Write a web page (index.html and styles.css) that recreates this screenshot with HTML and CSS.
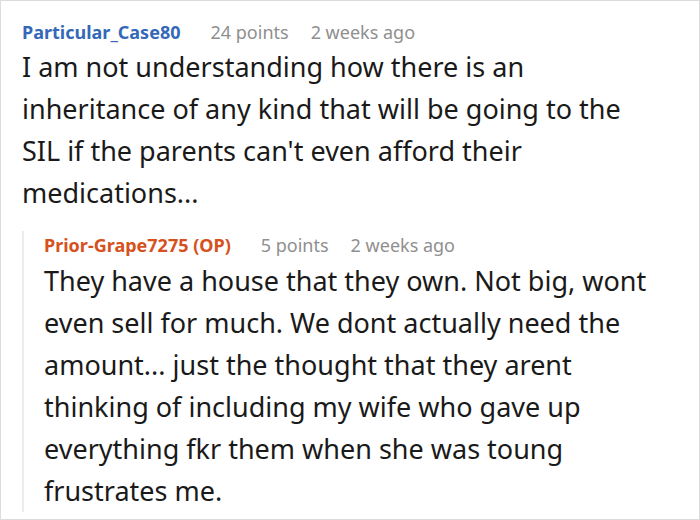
FILE: index.html
```html
<!DOCTYPE html>
<html>
<head>
<meta charset="utf-8">
<link rel="stylesheet" href="styles.css">
</head>
<body>
<div class="thread">
  <div class="comment">
    <div class="meta">
      <span class="author">Particular_Case80</span>
      <span class="info">24 points</span>
      <span class="info">2 weeks ago</span>
    </div>
    <p class="body">I am not understanding how there is an inheritance of any kind that will be going to the SIL if the parents can't even afford their medications...</p>
  </div>
  <div class="reply">
    <div class="meta">
      <span class="author op">Prior-Grape7275 (OP)</span>
      <span class="info">5 points</span>
      <span class="info">2 weeks ago</span>
    </div>
    <p class="body">They have a house that they own. Not big, wont even sell for much. We dont actually need the amount... just the thought that they arent thinking of including my wife who gave up everything fkr them when she was toung frustrates me.</p>
  </div>
</div>
</body>
</html>
```
FILE: styles.css
```css
html, body {
  margin: 0;
  padding: 0;
  background: #fff;
}
.thread {
  box-sizing: border-box;
  width: 700px;
  height: 520px;
  border: 1px solid #dcdcdc;
  padding: 17px 40px 0 21px;
  font-family: "Noto Sans", "Open Sans", sans-serif;
  color: #1a1a1a;
  overflow: hidden;
}
.meta {
  display: flex;
  gap: 22px;
  font-size: 18px;
  line-height: 28px;
}
.author {
  color: #3468b8;
  font-weight: 700;
  margin-right: 8px;
}
.author.op {
  color: #d6511d;
}
.info {
  color: #8f8f8f;
}
.body {
  margin: 0;
  font-size: 27px;
  line-height: 42px;
}
.comment .body {
  margin-top: 0;
}
.reply {
  margin-top: 20px;
  border-left: 2px solid #ececec;
  padding-left: 20px;
}
.reply .meta {
  margin-top: -3px;
}
.reply .body {
  margin-top: 1px;
  margin-bottom: -9px;
}
```
